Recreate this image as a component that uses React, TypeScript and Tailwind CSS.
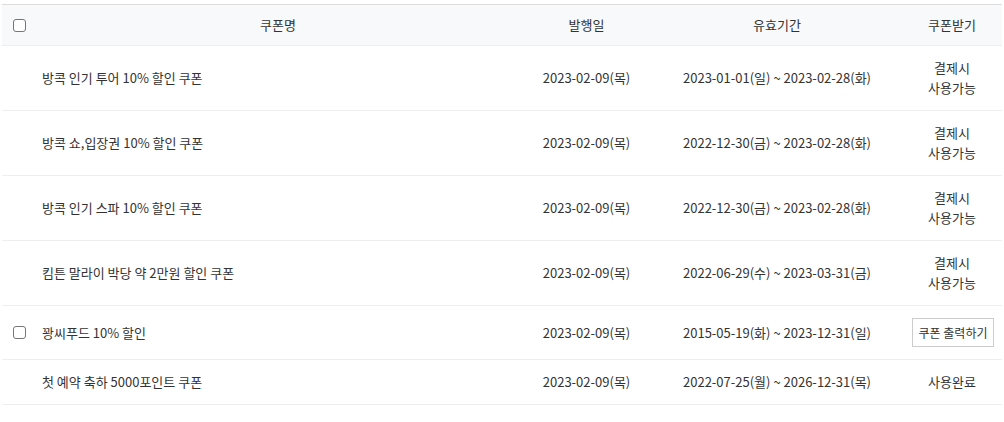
import React from 'react';

interface Coupon {
  name: string;
  issued: string;
  period: string;
  status: 'pay' | 'print' | 'used';
  checkable?: boolean;
}

const coupons: Coupon[] = [
  { name: '방콕 인기 투어 10% 할인 쿠폰', issued: '2023-02-09(목)', period: '2023-01-01(일) ~ 2023-02-28(화)', status: 'pay' },
  { name: '방콕 쇼,입장권 10% 할인 쿠폰', issued: '2023-02-09(목)', period: '2022-12-30(금) ~ 2023-02-28(화)', status: 'pay' },
  { name: '방콕 인기 스파 10% 할인 쿠폰', issued: '2023-02-09(목)', period: '2022-12-30(금) ~ 2023-02-28(화)', status: 'pay' },
  { name: '킴튼 말라이 박당 약 2만원 할인 쿠폰', issued: '2023-02-09(목)', period: '2022-06-29(수) ~ 2023-03-31(금)', status: 'pay' },
  { name: '꽝씨푸드 10% 할인', issued: '2023-02-09(목)', period: '2015-05-19(화) ~ 2023-12-31(일)', status: 'print', checkable: true },
  { name: '첫 예약 축하 5000포인트 쿠폰', issued: '2023-02-09(목)', period: '2022-07-25(월) ~ 2026-12-31(목)', status: 'used' },
];

const Checkbox = () => (
  <span className="block w-[13px] h-[13px] border border-[#767676] rounded-[3px] bg-white" />
);

const App: React.FC = () => {
  return (
    <div className="w-[1004px] h-[422px] bg-white pt-1 px-[2px] font-['Noto_Sans_CJK_KR','Noto_Sans',sans-serif] text-[13px] leading-5 text-[#333]">
      <div className="w-[1000px] border-t border-[#ddd]">
        <div className="flex items-center h-[41px] bg-[#f8f9fb] border-b border-[#eee]">
          <div className="w-[33px] flex justify-center pl-[1px]">
            <Checkbox />
          </div>
          <div className="w-[486px] text-center">쿠폰명</div>
          <div className="w-[131px] text-center">발행일</div>
          <div className="w-[250px] text-center">유효기간</div>
          <div className="w-[100px] text-center">쿠폰받기</div>
        </div>
        {coupons.map((c, i) => (
          <div key={i} className="flex items-center py-3 border-b border-[#eee]">
            <div className="w-[33px] flex justify-center pl-[1px]">
              {c.checkable && <Checkbox />}
            </div>
            <div className="w-[486px] pl-[7px]">{c.name}</div>
            <div className="w-[131px] text-center">{c.issued}</div>
            <div className="w-[250px] text-center">{c.period}</div>
            <div className="w-[100px] flex justify-center text-center">
              {c.status === 'pay' && (
                <span>
                  결제시
                  <br />
                  사용가능
                </span>
              )}
              {c.status === 'print' && (
                <button className="h-[29px] ml-[2px] px-[6px] border border-[#ccc] bg-white text-[12px] text-[#333] leading-none">
                  쿠폰 출력하기
                </button>
              )}
              {c.status === 'used' && <span>사용완료</span>}
            </div>
          </div>
        ))}
      </div>
    </div>
  );
};

export default App;
